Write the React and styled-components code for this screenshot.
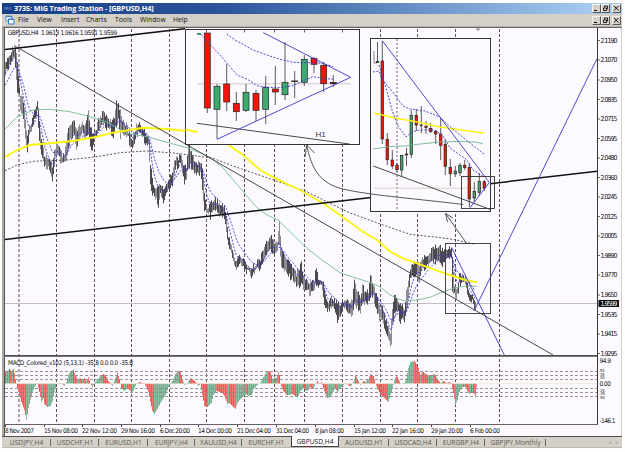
import React from 'react';
import styled, { createGlobalStyle } from 'styled-components';

const GlobalStyle = createGlobalStyle`
  body {
    margin: 0;
    background: #fefefe;
    overflow: hidden;
  }
`;

const Window = styled.div`
  box-sizing: border-box;
  width: 625px;
  height: 452px;
  padding: 3px 3px 3px 2px;
  display: flex;
  flex-direction: column;
  font-family: 'DejaVu Sans Condensed', 'DejaVu Sans', sans-serif;
  white-space: nowrap;
`;

const TitleBar = styled.header`
  display: flex;
  align-items: center;
  height: 11px;
  background: linear-gradient(90deg, #173f87 0%, #2c539a 35%, #5f88c0 62%, #a6caf0 95%);
  color: #fff;
`;

const Brand = styled.span`
  width: 12px;
  text-align: center;
  font-size: 4px;
  color: #8aa5d4;
`;

const Title = styled.h1`
  flex: 1;
  margin: 0;
  font-family: 'Open Sans', sans-serif;
  font-size: 7.2px;
  font-weight: 700;
  line-height: 11px;
  letter-spacing: -0.1px;
`;

const MenuBar = styled.nav`
  display: flex;
  align-items: center;
  height: 12px;
  background: #d4d0c8;
  border-bottom: 1px solid #b5b2ab;
`;

const MenuIcon = styled.svg`
  width: 10px;
  height: 10px;
  margin: 0 3px;
`;

const MenuItem = styled.span`
  width: ${props => props.$width}px;
  font-family: 'Open Sans', sans-serif;
  font-size: 6.8px;
  line-height: 12px;
  color: #111;
`;

const Buttons = styled.div`
  display: flex;
  margin-left: auto;
  padding-right: 1px;

  button:last-child {
    margin-left: 2px;
  }
`;

const Button = styled.button`
  box-sizing: border-box;
  width: 9px;
  height: 9px;
  padding: 0;
  display: flex;
  background: #d4d0c8;
  border: 1px solid;
  border-color: #f4f2ee #5a5854 #5a5854 #f4f2ee;
`;

const Frame = styled.main`
  height: 409px;
  box-sizing: border-box;
  display: flex;
  background: #fcfafe;
  border-top: 1px solid #666;
  border-left: 2px solid #aaa7a0;
  border-right: 1px solid #d4d0c8;
`;

const Chart = styled.svg`
  display: block;
  width: 616px;
  height: 408px;
  border-left: 1px solid #555;
  font-family: 'DejaVu Sans Condensed', 'DejaVu Sans', sans-serif;
`;

const Tabs = styled.footer`
  display: flex;
  height: 12px;
  box-sizing: border-box;
  background: #d4d0c8;
  border-top: 1px solid #55534f;
  border-bottom: 1px solid #bdb9b1;
`;

const Tab = styled.span`
  box-sizing: border-box;
  position: relative;
  width: ${props => props.$width}px;
  height: ${props => (props.$active ? 11 : 10)}px;
  margin-top: ${props => (props.$active ? -1 : 0)}px;
  font-family: 'Open Sans', sans-serif;
  font-size: 6.7px;
  line-height: 11px;
  text-align: center;
  color: ${props => (props.$active ? '#111' : '#5b5853')};
  background: ${props => (props.$active ? '#fff' : 'transparent')};
  border: ${props => (props.$active ? '1px solid #444' : '0')};
  border-top: 0;

  &::after {
    content: '';
    display: ${props => (props.$divider ? 'block' : 'none')};
    position: absolute;
    right: 0;
    top: 2px;
    width: 1px;
    height: 7px;
    background: #66635e;
  }
`;

const TabArrows = styled.span`
  display: flex;
  gap: 5px;
  margin-left: auto;
  padding-right: 4px;
  font-size: 5px;
  line-height: 10px;
  color: #a5a199;
`;

const menu = [
  ['File', 19], ['View', 24], ['Insert', 25], ['Charts', 29],
  ['Tools', 25], ['Window', 33], ['Help', 20],
];

const tabs = [
  ['USDJPY,H4', 49, 1], ['USDCHF,H1', 48, 1], ['EURUSD,H1', 49, 1],
  ['EURJPY,H4', 47, 1], ['XAUUSD,H4', 47, 1], ['EURCHF,H1', 49, 0],
  ['GBPUSD,H4', 48, 0], ['AUDUSD,H1', 50, 1], ['USDCAD,H4', 48, 1],
  ['EURGBP,H4', 48, 1], ['GBPJPY,Monthly', 61, 1],
];

const gridX = [19, 56.5, 94.5, 131.5, 169.5, 206.5, 244.5, 274.5, 304.5, 342.5, 380.5, 417.5, 455.5, 499.5];
const levels = [371.5, 375.5, 379.5, 388.5, 392.5, 396.5];

const prices = [
  ['2.1190', 40.5], ['2.1070', 60], ['2.0950', 80], ['2.0835', 99.5], ['2.0715', 119],
  ['2.0595', 138.5], ['2.0480', 158], ['2.0360', 177.5], ['2.0245', 197], ['2.0125', 216.5],
  ['2.0005', 236], ['1.9890', 255.5], ['1.9770', 275], ['1.9650', 295], ['1.9535', 314.5],
  ['1.9415', 334], ['1.9295', 353.5],
];

const dates = [
  ['8 Nov 2007', 5, 29], ['15 Nov 08:00', 44, 34], ['22 Nov 12:00', 82, 35],
  ['29 Nov 16:00', 121, 34], ['6 Dec 20:00', 160, 30], ['14 Dec 00:00', 198, 34],
  ['21 Dec 04:00', 237, 34], ['31 Dec 04:00', 276, 33], ['8 Jan 08:00', 315, 29],
  ['15 Jan 12:00', 354, 32], ['22 Jan 16:00', 392, 32], ['29 Jan 20:00', 431, 32],
  ['6 Feb 00:00', 470, 30],
];

// x, high, low
const bars = [
  [5, 62, 74], [8, 58, 70], [10, 52, 65], [12, 48, 60], [14, 45, 58], [16, 50, 80], [17, 62, 91],
  [19, 88, 95], [20, 94, 108], [22, 95, 115], [24, 110, 130], [26, 130, 146], [27, 138, 151],
  [29, 125, 138], [31, 122, 132], [33, 115, 126], [35, 108, 118], [37, 98, 112], [38, 108, 130],
  [40, 130, 150], [42, 142, 156], [44, 155, 165], [46, 155, 170], [48, 160, 169], [50, 162, 172],
  [52, 165, 180], [54, 150, 165], [56, 143, 153], [58, 146, 152], [60, 150, 163], [62, 155, 162],
  [64, 157, 162], [66, 140, 158], [68, 128, 150], [70, 125, 140], [72, 123, 136], [74, 122, 135],
  [76, 130, 149], [78, 128, 140], [80, 125, 136], [82, 124, 134], [84, 128, 138], [86, 120, 138],
  [88, 110, 137], [90, 125, 145], [92, 133, 151], [94, 130, 137], [96, 127, 136], [98, 120, 133],
  [100, 117, 128], [102, 113, 125], [104, 112, 124], [106, 115, 128], [108, 117, 128],
  [110, 120, 131], [112, 122, 140], [114, 118, 135], [116, 100, 125], [118, 103, 120],
  [120, 110, 138], [122, 118, 132], [124, 125, 138], [126, 123, 135], [128, 130, 138],
  [130, 135, 150], [132, 138, 147], [134, 133, 146], [136, 125, 137], [138, 122, 133],
  [140, 125, 136], [142, 125, 137], [144, 130, 141], [146, 133, 145], [148, 135, 147],
  [149, 140, 165], [150, 162, 185], [152, 180, 195], [154, 187, 197], [156, 185, 198],
  [158, 187, 208], [160, 182, 195], [162, 188, 200], [164, 190, 202], [166, 182, 195],
  [168, 180, 190], [170, 177, 188], [172, 170, 186], [174, 160, 175], [176, 158, 168],
  [178, 157, 166], [180, 152, 165], [182, 158, 172], [184, 168, 183], [186, 165, 178],
  [188, 142, 170], [190, 150, 166], [192, 155, 170], [194, 158, 172], [196, 163, 175],
  [198, 162, 175], [200, 162, 175], [202, 168, 190], [204, 190, 210], [206, 207, 215],
  [208, 205, 213], [210, 203, 218], [212, 200, 212], [215, 198, 210], [218, 202, 214],
  [221, 205, 216], [224, 205, 220], [226, 218, 232], [228, 235, 246], [230, 240, 250],
  [232, 248, 258], [234, 258, 267], [236, 262, 268], [238, 255, 266], [240, 255, 266],
  [243, 260, 268], [246, 263, 272], [249, 267, 274], [251, 269, 277], [254, 264, 272],
  [257, 260, 270], [260, 260, 268], [262, 250, 265], [264, 244, 258], [267, 243, 253],
  [269, 237, 250], [271, 236, 252], [274, 243, 254], [277, 240, 250], [279, 222, 246],
  [281, 250, 266], [284, 255, 272], [287, 260, 275], [290, 262, 278], [293, 266, 280],
  [296, 273, 287], [299, 268, 287], [301, 262, 285], [303, 275, 290], [306, 280, 290],
  [309, 282, 294], [312, 280, 294], [314, 280, 293], [315, 267, 285], [318, 277, 287],
  [321, 278, 286], [323, 282, 300], [325, 295, 310], [328, 302, 312], [330, 295, 310],
  [332, 297, 309], [335, 300, 312], [337, 300, 323], [340, 303, 315], [343, 300, 308],
  [346, 300, 310], [349, 302, 316], [352, 298, 315], [354, 280, 305], [357, 290, 308],
  [360, 298, 312], [362, 284, 306], [365, 293, 304], [368, 290, 304], [370, 272, 298],
  [373, 284, 298], [376, 293, 308], [379, 305, 320], [382, 308, 322], [385, 318, 330],
  [388, 325, 338], [390, 333, 347], [391, 320, 347], [392, 310, 326], [394, 296, 315],
  [396, 297, 312], [398, 300, 312], [400, 305, 326], [402, 303, 318], [404, 310, 321],
  [406, 292, 315], [408, 278, 300], [410, 270, 280], [412, 262, 277], [414, 262, 276],
  [417, 258, 277], [419, 265, 283], [422, 258, 270], [425, 257, 268], [428, 252, 265],
  [431, 250, 263], [434, 247, 262], [437, 247, 263], [439, 244, 265], [442, 250, 265],
  [445, 246, 262], [448, 249, 258], [451, 247, 258], [452, 255, 290], [454, 285, 296],
  [456, 290, 300], [458, 283, 293], [459, 275, 285], [461, 273, 283], [464, 275, 284],
  [466, 280, 290], [468, 290, 300], [470, 293, 303], [472, 292, 300], [474, 300, 311],
  [476, 298, 305],
];

// x, end of the histogram column
const macd = [
  [5, 371], [7, 371], [9, 369], [11, 371], [13, 369], [14, 373], [15, 380], [16, 384], [17, 388],
  [19, 395], [21, 402], [24, 410], [26, 420], [28, 408], [30, 400], [32, 393], [34, 387],
  [36, 384], [37, 384], [39, 392], [41, 402], [43, 398], [44, 404], [47, 407], [50, 406],
  [52, 401], [54, 392], [56, 384], [60, 383], [62, 384], [64, 386], [66, 382], [68, 375],
  [70, 371], [73, 370], [75, 376], [77, 379], [80, 378], [82, 380], [84, 378], [86, 381],
  [88, 377], [90, 384], [92, 387], [94, 383], [97, 380], [100, 376], [103, 374], [106, 377],
  [108, 381], [110, 383], [112, 386], [114, 380], [117, 373], [119, 379], [121, 388],
  [124, 391], [127, 388], [130, 391], [132, 393], [134, 388], [136, 384], [139, 382],
  [142, 383], [144, 384], [146, 387], [148, 392], [150, 402], [152, 411], [154, 414],
  [157, 409], [160, 403], [163, 398], [166, 393], [168, 387], [170, 384], [172, 381],
  [175, 374], [178, 371], [180, 371], [182, 380], [184, 385], [187, 383], [190, 378],
  [193, 380], [196, 383], [198, 386], [200, 384], [202, 395], [204, 406], [207, 407],
  [211, 403], [213, 395], [216, 391], [219, 392], [222, 393], [224, 396], [227, 404],
  [229, 403], [232, 406], [235, 409], [237, 403], [240, 399], [243, 396], [246, 394],
  [248, 396], [251, 395], [253, 389], [256, 386], [258, 384], [260, 383], [263, 377],
  [266, 372], [268, 371], [270, 372], [272, 379], [274, 378], [276, 378], [278, 372],
  [279, 375], [280, 384], [283, 391], [286, 395], [289, 395], [292, 394], [295, 396],
  [298, 396], [300, 391], [303, 388], [306, 391], [308, 390], [310, 387], [313, 389],
  [315, 384], [317, 381], [319, 384], [321, 382], [323, 388], [325, 394], [327, 398],
  [330, 397], [332, 393], [335, 388], [337, 392], [339, 389], [342, 386], [345, 383],
  [348, 385], [350, 387], [353, 382], [355, 375], [358, 381], [360, 385], [363, 381],
  [365, 382], [368, 379], [370, 374], [373, 376], [375, 383], [377, 389], [380, 394],
  [384, 398], [388, 402], [390, 395], [392, 389], [394, 380], [396, 375], [398, 379],
  [400, 384], [404, 383], [406, 378], [408, 368], [410, 362], [414, 361], [416, 364],
  [418, 368], [420, 376], [422, 371], [425, 374], [428, 375], [431, 375], [434, 374],
  [437, 379], [440, 383], [443, 381], [446, 383], [449, 382], [451, 384], [453, 393],
  [455, 405], [457, 400], [459, 392], [462, 387], [465, 387], [467, 391], [469, 394],
  [471, 393], [473, 393], [475, 396], [476, 387], [477, 384],
];

// x, high, low, body top, body bottom, color
const hourly = [
  [207.3, 33, 113, 33, 108, 'r'], [217, 84, 139, 86.3, 109.3, 'g'],
  [226.7, 64, 111, 84, 102, 'r'], [236.3, 92, 121, 103.3, 111.7, 'r'],
  [246, 84, 112, 92.3, 110.3, 'g'], [256, 90, 121, 93.3, 110.3, 'r'],
  [265.7, 76, 124, 87.3, 109.3, 'g'], [275.3, 66, 105, 89, 92, 'r'],
  [285, 42, 100, 82.3, 94.7, 'g'], [294.7, 71, 98, 81, 81.5, 'r'],
  [304.3, 55, 86, 59.3, 82.3, 'g'], [314, 57, 73, 58.5, 64.3, 'r'],
  [323.7, 62, 92, 65.3, 83.7, 'r'], [333.3, 75, 87, 82.5, 83.7, 'r'],
];

const fourHour = [
  [377.5, 42, 63, 61.5, 62.5, 'g'], [382.3, 41, 144, 61, 139, 'r'],
  [387.3, 133, 165, 139.3, 159.7, 'r'], [392.3, 150, 169, 160, 166, 'r'],
  [397, 163, 172, 165.3, 169.7, 'r'], [401.7, 155, 176, 155.3, 170, 'g'],
  [406.5, 148, 166, 154, 155, 'g'], [411.3, 110, 158, 115.3, 154.3, 'g'],
  [416.3, 109, 131, 115.3, 125, 'r'], [421.3, 106, 133, 125, 125.5, 'r'],
  [426, 121, 134, 126.3, 127.5, 'r'], [430.7, 123, 133, 128.5, 131.5, 'r'],
  [435.7, 130, 144, 131.5, 134, 'r'], [440.7, 118, 160, 134, 145.3, 'r'],
  [445.3, 139, 175, 144.3, 166.3, 'r'], [450.3, 159, 186, 167.3, 173.7, 'r'],
  [455.3, 166, 177, 171, 174, 'g'], [460, 163, 176, 165.3, 172.7, 'g'],
  [464.7, 160, 170, 165.3, 167.5, 'r'], [469.3, 163, 207, 167.3, 199, 'r'],
  [474.3, 182, 202, 191.3, 198, 'g'], [479.3, 173, 196, 181.3, 192.3, 'g'],
  [484.3, 180, 191, 181.7, 188, 'r'],
];

const fill = { r: '#f3150c', g: '#3cab70' };

// linear interpolation of every value after x, one row per pixel
const perPixel = rows => {
  const out = [];
  for (let i = 0; i < rows.length - 1; i += 1) {
    const [x0, ...a] = rows[i];
    const [x1, ...b] = rows[i + 1];
    for (let x = x0; x < x1; x += 1) {
      const t = (x - x0) / (x1 - x0);
      out.push([x, ...a.map((v, k) => v + (b[k] - v) * t)]);
    }
  }
  return out;
};

const noise = x => {
  const v = Math.sin(x * 12.9898) * 43758.5453;
  return v - Math.floor(v);
};

const average = (rows, period) => {
  let value = (rows[0][1] + rows[0][2]) / 2 + period;
  return rows
    .map(([x, high, low]) => {
      value += (((high + low) / 2 - value) * 2) / (period + 1);
      return `${x},${value.toFixed(1)}`;
    })
    .join(' ');
};

const priceRows = perPixel(bars);
const macdRows = perPixel(macd);

const Candles = ({ data, width }) =>
  data.map(([x, high, low, top, bottom, color]) => (
    <g key={x}>
      <line x1={x} x2={x} y1={high} y2={low} stroke="#333" strokeWidth="0.8" />
      <rect
        x={x - width / 2}
        y={top}
        width={width}
        height={bottom - top}
        fill={fill[color]}
        stroke="#26221f"
        strokeWidth="0.7"
      />
    </g>
  ));

const Line = ({ points, color = '#333', width = 0.9, dash }) => (
  <polyline points={points} fill="none" stroke={color} strokeWidth={width} strokeDasharray={dash} />
);

const blue = '#3a38cc';

const WindowButtons = () => (
  <Buttons>
    <Button>
      <svg width="7" height="7"><path d="M1 5.5h3" stroke="#111" /></svg>
    </Button>
    <Button>
      <svg width="7" height="7">
        <path d="M2.5 2.5v-1.5h3v3h-1M1.5 3h3v2.5h-3z" fill="none" stroke="#111" strokeWidth="0.9" />
      </svg>
    </Button>
    <Button>
      <svg width="7" height="7"><path d="M1 1l4.5 4.5M5.5 1l-4.5 4.5" stroke="#111" /></svg>
    </Button>
  </Buttons>
);

const Prices = () => (
  <g>
    <line x1="5" x2="597" y1="303.5" y2="303.5" stroke="#c4bcc4" />
    {priceRows.map(([x, high, low]) => (
      <line
        key={x}
        x1={x + 0.5}
        x2={x + 0.5}
        y1={high + noise(x) * 6 - 2.5}
        y2={low - noise(x + 7) * 6 + 2.5}
        stroke={noise(x + 3) > 0.45 ? '#4c494f' : '#8f8c91'}
      />
    ))}
    <Line color={blue} dash="2 1.5" points={average(priceRows, 8)} />
    <Line color={blue} dash="2 1.5" points={average(priceRows, 19)} />
    <Line
      color="#77bb95"
      points="5,129 17,117 33,110 50,109.3 70,111.7 90,116.7 107,122 115,126.7 127,133.3 147,136.7 167,142.3 187,147.7 210,157 223,168 240,188 257,207.7 267,215 278,220 290,231.7 307,248.3 323,260.7 340,272.7 357,278.3 370,282.5 380,286.7 390,295 403,300.7 417,300 430,297.3 443,291.7 455,287.7 467,286 477,286.3"
    />
    <Line
      dash="2 1.7"
      color="#444"
      points="5,170.7 17,165 33,161.3 67,160 97,156.7 120,152.7 147,151 173,153 190,155 213,158.3 233,166 257,174.3 283,183.3 307,191.7 330,203.3 350,213 390,227.5 410,234.3 437,237.3 453,239.3 475,244.3"
    />
    <Line
      color="#fbf60e"
      width={1.9}
      points="5,157.3 17,150 30,145 50,143.3 73,141 97,136.7 113,132.7 143,127.7 167,129 197,132"
    />
    <Line
      color="#fbf60e"
      width={1.9}
      points="228,144.5 243,155 260,170 280,180.7 300,190 323,203.3 340,215 363,231.7 377,240 390,251.5 403,258.3 420,264.3 437,270.7 453,276 465,280 477,282.3"
    />
    <Line color="#111" width={1.5} points="5,49.5 185,28.7" />
    <Line color="#111" width={1.5} points="5,239.5 373.5,197.3" />
    <Line color="#111" width={1.5} points="490,183.7 597,171.3" />
    <Line points="14,45.5 553,355" />
    <Line color={blue} points="597,58.7 474,311" />
    <Line color={blue} points="451.7,247.7 504.3,355" />
    <rect x="445.5" y="243.5" width="45" height="70" fill="none" stroke="#333" strokeWidth="0.9" />
  </g>
);

const HourlyInset = () => (
  <g>
    <rect x="185.5" y="29.5" width="174" height="115" fill="#fcfafe" stroke="#333" />
    <Line color="#fbf60e" width={1.9} points="185.5,130 190,130.5 197,132" />
    {[206.5, 244.5, 274.5, 304.5, 342.5].map(x => (
      <line key={x} x1={x} x2={x} y1="30" y2="32.5" stroke="#6e6064" />
    ))}
    <Line color="#c9c4c9" points="197,83.8 351,83.8" />
    <rect x="197" y="33" width="4" height="1.8" fill="#2d9059" />
    <Candles data={hourly} width={6} />
    <line x1="291.5" x2="298" y1="81.3" y2="81.3" stroke="#222" strokeWidth="0.8" />
    <line x1="330" x2="336.5" y1="83" y2="83" stroke="#222" strokeWidth="0.8" />
    <Line points="197,123.3 349.5,144" />
    <Line
      color={blue}
      dash="2 1.5"
      points="201,34.3 210,44.3 220,55 230,66.7 237,75 247,79 257,85.7 267,87.3 280,87.7 293,85.7 303,80.7 313,76.7 323,78.3 333,79.3"
    />
    <Line
      color={blue}
      dash="2 1.5"
      points="226.7,34 235,40 243,44.3 253,50 267,55 280,59.3 293,62.3 310,62.7 323,63.3 333,66.7"
    />
    <Line color={blue} points="263.3,32.7 350.7,77.3 217,139.3" />
    <text x="315.5" y="136.5" fontSize="8" fontFamily="Liberation Sans, sans-serif" fill="#333">H1</text>
  </g>
);

const FourHourInset = () => (
  <g>
    <rect x="370.5" y="38.5" width="120" height="173" fill="#fcfafe" stroke="#333" />
    <line x1="397" x2="397" y1="39" y2="211" stroke="#6e6064" strokeDasharray="2 2" />
    <Line color="#dcc6c4" points="374,188.2 485,188.2" />
    <path d="M374 51v12h3" fill="none" stroke="#777" strokeWidth="0.9" />
    <Candles data={fourHour} width={2.5} />
    <Line color="#fbf60e" width={1.7} points="374,113 395,118 415,121.5 440,127 465,130.5 484,133" />
    <Line
      color="#6cb890"
      points="373,149 390,146.5 405,146 420,144 440,142 460,141.5 475,142 483,143.5"
    />
    <Line
      color={blue}
      dash="2 1.5"
      points="373,72 379,71 382,79 387,85 395,95 403,106 410,109 425,111 440,117 447,124 460,135 470,143 484,154"
    />
    <Line
      color={blue}
      dash="2 1.5"
      points="379,65 382,76 386,88 392,110 398,126 406,137 412,132 420,130 435,130 443,136 450,148 460,155 467,160 473,170 484,177"
    />
    <Line points="373.3,166 490,209.3" />
    <Line color={blue} points="382.3,40.7 489.3,182.5 470,207.7" />
    <rect x="461.5" y="176.5" width="33" height="32" fill="none" stroke="#333" strokeWidth="0.9" />
  </g>
);

const Arrows = () => (
  <g fill="none" stroke="#444" strokeWidth="0.9">
    <path d="M306.7 145C311 166 318 184 345 189.5C375 196 420 199 463 204.5" />
    <path d="M305 157L306.7 145L314.7 153" />
    <path d="M466.7 243.5L445.5 213.5M447.5 222L445.5 213.5L453 218" />
  </g>
);

const Macd = () => (
  <g>
    {macdRows.map(([x, y], i) => {
      const next = macdRows[i + 1] || [x, y + 1];
      return (
        <line
          key={x}
          x1={x + 0.5}
          x2={x + 0.5}
          y1="383.7"
          y2={y}
          stroke={next[1] > y || (next[1] === y && x % 2) ? '#fb5553' : '#70b08d'}
          strokeOpacity={x % 2 ? 1 : 0.8}
        />
      );
    })}
    {levels.map(y => (
      <line key={y} x1="5" x2="597" y1={y} y2={y} stroke="#8f878b" strokeWidth="0.9" strokeDasharray="3 2" />
    ))}
    <line x1="5" x2="597" y1="383.7" y2="383.7" stroke="#e9dfc8" strokeWidth="0.6" />
  </g>
);

const Axes = () => (
  <g>
    <line x1="5" x2="598" y1="355.8" y2="355.8" stroke="#4f4c50" strokeWidth="1.8" />
    <line x1="597.5" x2="597.5" y1="28" y2="425" stroke="#333" />
    <line x1="5" x2="598" y1="424.5" y2="424.5" stroke="#6b5f66" />
    {prices.map(([label, y]) => (
      <g key={label}>
        <line x1="598" x2="600" y1={y} y2={y} stroke="#444" strokeWidth="0.8" />
        <text x="600.5" y={y + 2.4} fontSize="6.8" textLength="17" fill="#111">{label}</text>
      </g>
    ))}
    <rect x="598.5" y="300" width="20.5" height="7" fill="#0b0b0b" />
    <text x="600.5" y="305.9" fontSize="6.8" textLength="17" fill="#fff">1.9599</text>
    {dates.map(([label, x, width]) => (
      <g key={label}>
        <line x1={x + 0.5} x2={x + 0.5} y1="425" y2="427" stroke="#444" />
        <text x={x} y="433" fontSize="6.5" textLength={width} fill="#111">{label}</text>
      </g>
    ))}
    <g fontSize="6.5" fill="#111">
      <text x="599.5" y="363.3" textLength="11.5">94.9</text>
      <text x="599.5" y="386.2" textLength="11.5">0.00</text>
      <text x="599.5" y="423.3" textLength="16">-146.1</text>
    </g>
    <g fontSize="4" fill="#111">
      <text x="600" y="371.8">50</text>
      <text x="600" y="375.6">35</text>
      <text x="600" y="379.4">20</text>
      <text x="599" y="391.6">-20</text>
      <text x="599" y="395.4">-35</text>
      <text x="599" y="399.2">-50</text>
    </g>
    <path d="M475.5 28.5h5l-2.5 2.5z" fill="#888" />
    <text x="7.7" y="35.4" fontSize="6.4" textLength="109.5" fill="#111" xmlSpace="preserve">
      {'GBPUSD,H4  1.9613 1.9616 1.9591 1.9599'}
    </text>
    <text x="8" y="364.9" fontSize="6.4" textLength="125" fill="#111">
      MACD_Colored_v102 (5,13,1) -35.8 0.0 0.0 -35.8
    </text>
  </g>
);

const App = () => (
  <Window>
    <GlobalStyle />
    <TitleBar>
      <Brand>MIG</Brand>
      <Title>3735: MIG Trading Station - [GBPUSD,H4]</Title>
      <WindowButtons />
    </TitleBar>
    <MenuBar>
      <MenuIcon viewBox="0 0 10 10">
        <path d="M1 1h6v5h-6z" fill="#e8f2fc" stroke="#5b93cf" />
        <path d="M3.5 4h5.5v5h-5.5z" fill="#f4f9ff" stroke="#3c7cc4" />
        <path d="M1 1.5h6M3.5 4.5h5.5" stroke="#3c7cc4" />
      </MenuIcon>
      {menu.map(([label, width]) => (
        <MenuItem key={label} $width={width}>{label}</MenuItem>
      ))}
      <WindowButtons />
    </MenuBar>
    <Frame>
      <Chart viewBox="5 28 616 408">
        <g stroke="#5f5055" strokeDasharray="3 2">
          {gridX.map(x => (
            <line key={x} x1={x} x2={x} y1="29" y2="424" />
          ))}
        </g>
        <Prices />
        <HourlyInset />
        <FourHourInset />
        <Arrows />
        <Macd />
        <Axes />
      </Chart>
    </Frame>
    <Tabs>
      {tabs.map(([label, width, divider]) => (
        <Tab key={label} $width={width} $divider={divider} $active={label === 'GBPUSD,H4'}>
          {label}
        </Tab>
      ))}
      <TabArrows>
        <span>◂</span>
        <span>▸</span>
      </TabArrows>
    </Tabs>
  </Window>
);

export default App;
